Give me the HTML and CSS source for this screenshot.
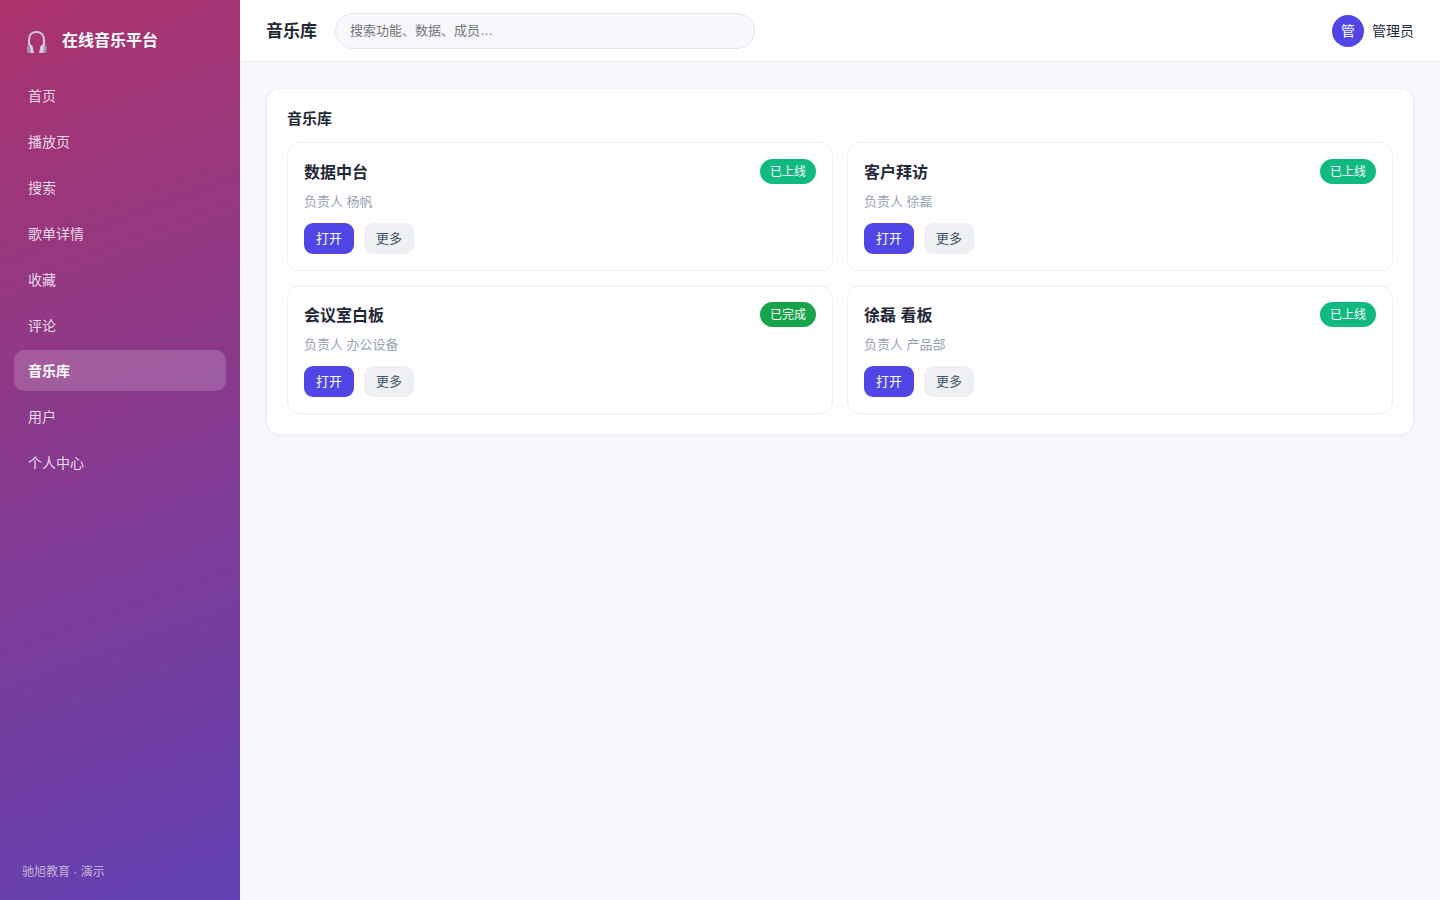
FILE: index.html
```html
<!DOCTYPE html>
<html lang="zh-CN">
<head>
    <meta charset="UTF-8">
    <meta name="viewport" content="width=device-width, initial-scale=1.0">
    <title>音乐库 - 在线音乐平台</title>
    <link rel="stylesheet" href="styles.css">
</head>
<body>
    <div class="app">
        <aside class="sidebar">
            <div class="brand">
                <svg class="logo" viewBox="0 0 22 24" aria-hidden="true">
                    <path d="M3 15V10C3 5 6 2 10.500 2S18 5 18 10v5" fill="none" stroke="#cbc2d6" stroke-width="2.200"/>
                    <path d="M10.500 1v1" stroke="#cbc2d6" stroke-width="2"/>
                    <path d="M2 16l2-2.500 2.500 2.500 1.500 7H3.500L2 20z" fill="#d3cbdc"/>
                    <path d="M19.500 16l-2-2.500-3 2.500-1.500 7h5l1.500-3z" fill="#d3cbdc"/>
                    <path d="M3 14.500L1 17v5l1 1h3L4 17z" fill="#a48db1"/>
                    <path d="M18.500 14.500l2 2.500v5l-1 1H17l1.200-6z" fill="#a48db1"/>
                </svg>
                <span>在线音乐平台</span>
            </div>
            <nav class="nav">
                <a href="#">首页</a>
                <a href="#">播放页</a>
                <a href="#">搜索</a>
                <a href="#">歌单详情</a>
                <a href="#">收藏</a>
                <a href="#">评论</a>
                <a href="#" class="active">音乐库</a>
                <a href="#">用户</a>
                <a href="#">个人中心</a>
            </nav>
            <div class="side-foot">驰旭教育 · 演示</div>
        </aside>
        <div class="main">
            <header class="topbar">
                <h1>音乐库</h1>
                <input type="search" class="search" placeholder="搜索功能、数据、成员…" aria-label="搜索">
                <div class="user">
                    <span class="avatar">管</span>
                    <span>管理员</span>
                </div>
            </header>
            <main class="content">
                <section class="panel">
                    <h2>音乐库</h2>
                    <div class="grid">
                        <article class="card">
                            <div class="card-head">
                                <h3>数据中台</h3>
                                <span class="badge online">已上线</span>
                            </div>
                            <p>负责人 杨帆</p>
                            <div class="actions">
                                <button type="button" class="btn primary">打开</button>
                                <button type="button" class="btn">更多</button>
                            </div>
                        </article>
                        <article class="card">
                            <div class="card-head">
                                <h3>客户拜访</h3>
                                <span class="badge online">已上线</span>
                            </div>
                            <p>负责人 徐磊</p>
                            <div class="actions">
                                <button type="button" class="btn primary">打开</button>
                                <button type="button" class="btn">更多</button>
                            </div>
                        </article>
                        <article class="card">
                            <div class="card-head">
                                <h3>会议室白板</h3>
                                <span class="badge done">已完成</span>
                            </div>
                            <p>负责人 办公设备</p>
                            <div class="actions">
                                <button type="button" class="btn primary">打开</button>
                                <button type="button" class="btn">更多</button>
                            </div>
                        </article>
                        <article class="card">
                            <div class="card-head">
                                <h3>徐磊 看板</h3>
                                <span class="badge online">已上线</span>
                            </div>
                            <p>负责人 产品部</p>
                            <div class="actions">
                                <button type="button" class="btn primary">打开</button>
                                <button type="button" class="btn">更多</button>
                            </div>
                        </article>
                    </div>
                </section>
            </main>
        </div>
    </div>
</body>
</html>
```
FILE: styles.css
```css
* {
    box-sizing: border-box;
}
body {
    margin: 0;
    font-family: "Liberation Sans", "Noto Sans CJK SC", sans-serif;
    font-size: 14px;
    line-height: 20px;
    color: #1f2937;
    background: #f5f7fb;
}
h1, h2, h3, p {
    margin: 0;
}
.app {
    display: flex;
    min-height: 100vh;
}

/* sidebar */
.sidebar {
    width: 240px;
    flex-shrink: 0;
    display: flex;
    flex-direction: column;
    padding: 22px 14px 18px;
    color: #fff;
    background: linear-gradient(160deg, #ab336c, #6141b3);
}
.brand {
    display: flex;
    align-items: center;
    gap: 14px;
    height: 36px;
    padding: 2px 12px 0;
    margin-bottom: 16px;
    font-size: 16px;
    font-weight: 700;
}
.logo {
    width: 22px;
    height: 24px;
    margin-top: 2px;
}
.nav {
    display: flex;
    flex-direction: column;
    gap: 4px;
}
.nav a {
    padding: 13px 14px 11px;
    border-radius: 10px;
    line-height: 18px;
    color: rgba(255, 255, 255, 0.82);
    text-decoration: none;
}
.nav a.active {
    line-height: 17px;
    font-weight: 700;
    color: #fff;
    background: rgba(255, 255, 255, 0.18);
}
.side-foot {
    margin-top: auto;
    padding: 0 8px;
    font-size: 12px;
    color: rgba(255, 255, 255, 0.6);
}

/* top bar */
.main {
    flex: 1;
    min-width: 0;
}
.topbar {
    display: flex;
    align-items: center;
    gap: 18px;
    height: 62px;
    padding: 0 26px;
    background: #fff;
    border-bottom: 1px solid #eef0f4;
}
.topbar h1 {
    padding-top: 2px;
    font-size: 17px;
}
.search {
    flex: 0 1 420px;
    min-width: 0;
    height: 36px;
    padding: 0 14px;
    border: 1px solid #e5e7eb;
    border-radius: 18px;
    background: #f7f8fc;
    font-family: inherit;
    font-size: 13px;
    appearance: none;
}
.search::placeholder {
    color: #757575;
}
.user {
    display: flex;
    align-items: center;
    gap: 8px;
    margin-left: auto;
}
.avatar {
    width: 32px;
    height: 32px;
    border-radius: 50%;
    background: #4f46e5;
    color: #fff;
    line-height: 32px;
    text-align: center;
}

/* content */
.content {
    padding: 26px;
}
.panel {
    padding: 20px;
    border: 1px solid #eef0f4;
    border-radius: 14px;
    background: #fff;
    box-shadow: 0 1px 3px rgba(0, 0, 0, 0.04);
}
.panel h2 {
    margin-bottom: 14px;
    font-size: 15px;
    line-height: 19px;
}
.grid {
    display: grid;
    grid-template-columns: 1fr 1fr;
    gap: 14px;
}
.card {
    padding: 16px;
    border: 1px solid #eef0f4;
    border-radius: 12px;
}
.card-head {
    display: flex;
    align-items: center;
    justify-content: space-between;
}
.card h3 {
    padding-top: 2px;
    font-size: 16px;
}
.badge {
    padding: 1px 10px 0;
    border-radius: 13px;
    font-size: 12px;
    line-height: 24px;
    color: #fff;
}
.badge.online {
    background: #10b981;
}
.badge.done {
    background: #16a34a;
}
.card p {
    margin: 7px 0 11px;
    font-size: 13px;
    line-height: 21px;
    color: #98a2b3;
}
.actions {
    display: flex;
    gap: 10px;
}
.btn {
    height: 31px;
    padding: 0 12px 2px;
    border: none;
    border-radius: 9px;
    background: #eef0f4;
    color: #475569;
    font-family: inherit;
    font-size: 13px;
    cursor: pointer;
}
.btn.primary {
    background: #4f46e5;
    color: #fff;
}
@media (max-width: 768px) {
    .grid {
        grid-template-columns: 1fr;
    }
}
```
